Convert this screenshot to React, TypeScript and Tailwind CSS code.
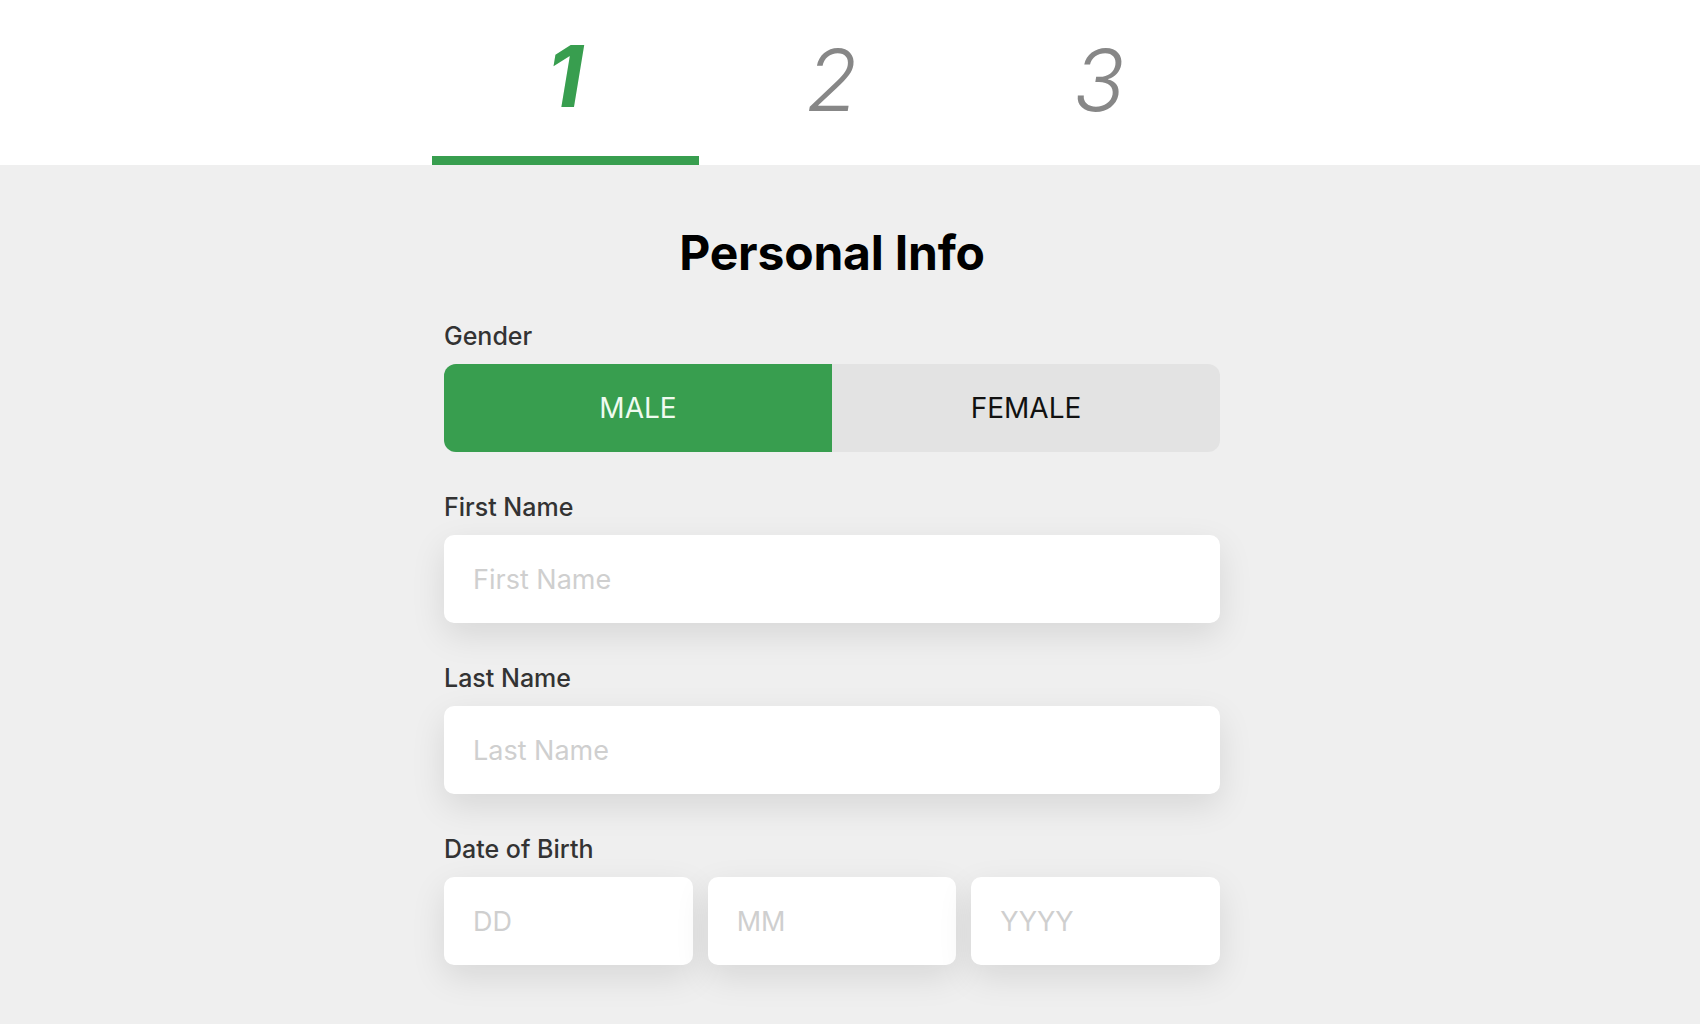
import { useState } from 'react'

const steps = ['1', '2', '3']

function StepTabs({ active }: { active: number }) {
  return (
    <header className="bg-white">
      <div className="flex justify-center pr-[36px]">
        <nav className="flex w-[801px]">
          {steps.map((step, i) => {
            const isActive = i === active
            return (
              <div key={step} className="flex h-[165px] w-[267px] flex-col items-center">
                <span
                  className={
                    isActive
                      ? 'pt-[34px] text-[85px] font-bold italic leading-none text-[#389e4f]'
                      : 'pt-[38px] text-[85px] font-light italic leading-none text-[#878787]'
                  }
                >
                  {step}
                </span>
                {isActive && <div className="mt-auto h-[9px] w-full bg-[#389e4f]" />}
              </div>
            )
          })}
        </nav>
      </div>
    </header>
  )
}

function Label({ children }: { children: string }) {
  return (
    <label className="mb-[13px] block text-[25px] font-medium leading-[29px] text-[#333333]">
      {children}
    </label>
  )
}

const inputClass =
  'h-[88px] w-full rounded-[10px] bg-white px-[29px] text-[27px] text-[#222222] shadow-[0_12px_34px_rgba(0,0,0,0.1)] outline-none placeholder:text-[#cfcfcf]'

export default function App() {
  const [gender, setGender] = useState<'male' | 'female'>('male')

  return (
    <div
      className="min-h-screen bg-[#efefef]"
      style={{ fontFamily: 'Inter, "Noto Sans", sans-serif' }}
    >
      <StepTabs active={0} />

      <main className="flex justify-center pr-[36px] pt-[64px] pb-[60px]">
        <div className="w-[776px]">
          <h1 className="mb-[45px] text-center text-[48px] font-bold leading-none tracking-[-0.2px] text-black">
            Personal Info
          </h1>

          <div className="flex flex-col gap-[41px]">
            <div>
              <Label>Gender</Label>
              <div className="flex h-[88px] overflow-hidden rounded-[12px] bg-[#e3e3e3]">
                <button
                  onClick={() => setGender('male')}
                  className={
                    gender === 'male'
                      ? 'flex-1 bg-[#389e4f] text-[28px] text-[#effbef]'
                      : 'flex-1 text-[28px] text-[#111111]'
                  }
                >
                  MALE
                </button>
                <button
                  onClick={() => setGender('female')}
                  className={
                    gender === 'female'
                      ? 'flex-1 bg-[#389e4f] text-[28px] text-[#effbef]'
                      : 'flex-1 text-[28px] text-[#111111]'
                  }
                >
                  FEMALE
                </button>
              </div>
            </div>

            <div>
              <Label>First Name</Label>
              <input className={inputClass} placeholder="First Name" />
            </div>

            <div>
              <Label>Last Name</Label>
              <input className={inputClass} placeholder="Last Name" />
            </div>

            <div>
              <Label>Date of Birth</Label>
              <div className="grid grid-cols-3 gap-[15px]">
                <input className={inputClass} placeholder="DD" />
                <input className={inputClass} placeholder="MM" />
                <input className={inputClass} placeholder="YYYY" />
              </div>
            </div>
          </div>
        </div>
      </main>
    </div>
  )
}
